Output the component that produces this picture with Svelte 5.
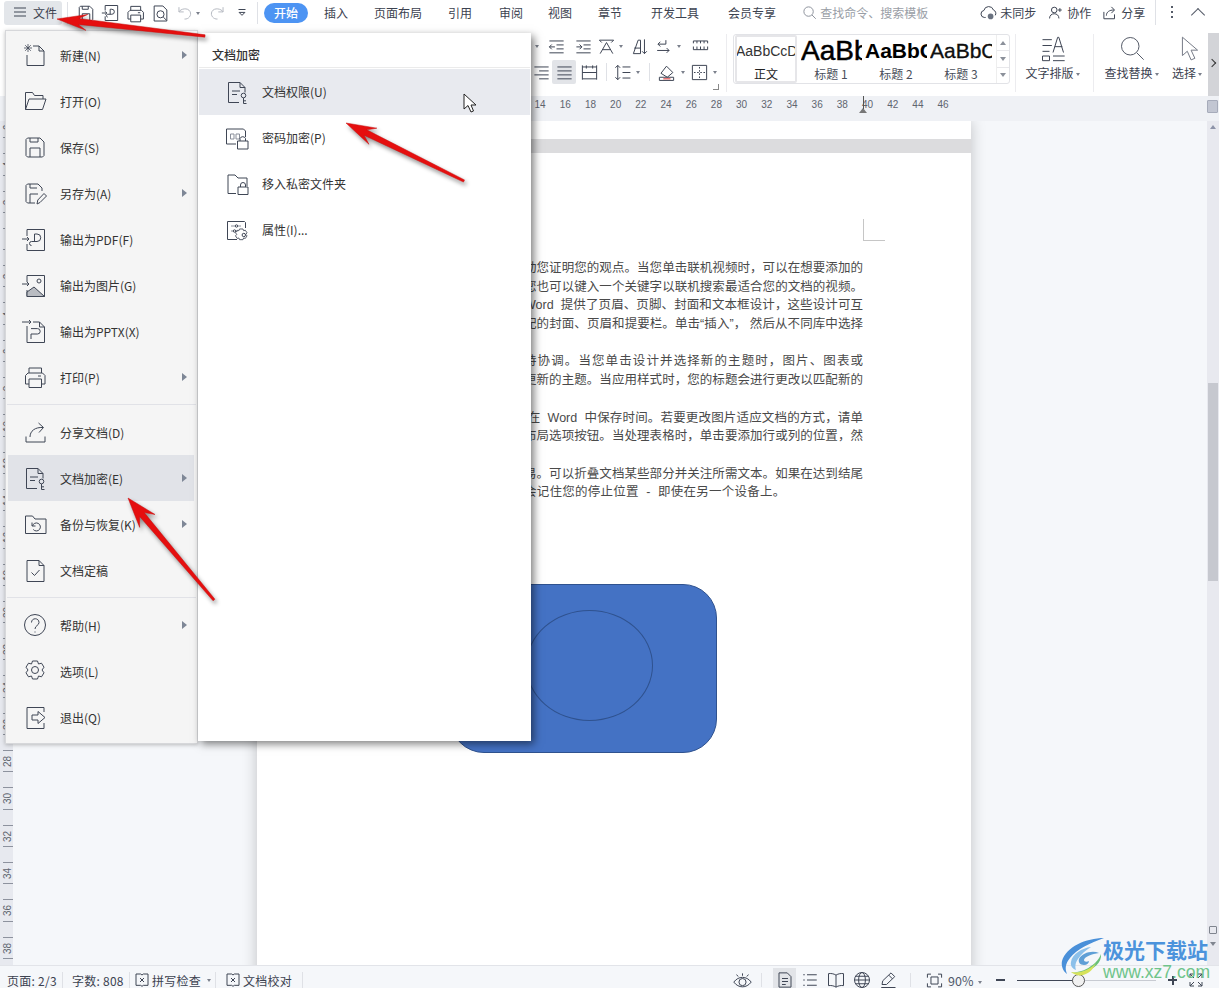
<script>
	const icons = {
		menu: '<path d="M3 6h18M3 12h18M3 18h18"/>',
		save: '<path d="M3 4.500 4.500 3H17l4 4v13.500L19.500 22h-15L3 20.500z"/><path d="M7 22v-9h10v9M7 3v4h8V3"/>',
		saveAs: '<path d="M12 22H4.500L3 20.500v-16L4.500 3H15l4 4v3"/><path d="M7 22v-9h8M7 3v4h7"/><path d="m14 23 .8-4L21 12.500l2.500 2.500-6.500 6.500z"/>',
		newDoc: '<path d="M10 3h6l5 5v14.500H4V12"/><path d="M16 3v5h5"/><path d="M5 1v8M1 5h8M2.200 2.200l5.600 5.600M7.800 2.200 2.200 7.800" stroke-width=".8"/>',
		open: '<path d="M2.500 20.500v-17h7l2 3h8.500V10"/><path d="M2.500 20.500h17L23 10H6z"/>',
		pdf: '<path d="M4 9V2.500h17.500v21H4V17"/><path d="M-1 12h7M4 10l2 2-2 2"/><path d="M8.500 18.500a2 2 0 0 1 0-4H14a3.700 3.700 0 0 0 0-7.500h-2.500v7.500"/>',
		image: '<path d="M4 9V2.500h17.500v21H4V17"/><path d="M-1 11h7M4 9l2 2-2 2"/><circle cx="16" cy="8" r="2"/><path d="M4 23.500V19l7-5 10.500 9.500z" fill="#b9bcc2"/>',
		pptx: '<path d="M4 7v16.500h17.500V8l-5-5H10"/><path d="M16.500 3v5h5"/><path d="M-1 3h9M6 1l2 2-2 2"/><path d="M8 15h6.500a2.700 2.700 0 0 0 0-5.400H8M8 15v5"/>',
		print: '<path d="M6 8V3h12.500v5"/><path d="M6 19H2.500V10.500L5 8h14.500L22 10.500V19h-3.500"/><path d="M6 14h12.500v8.500H6z"/><path d="M15 11h3"/>',
		share: '<path d="M3 16.500v5.500h19v-5.500"/><path d="M7 17c0-6 5-10 13-9.500"/><path d="m15.500 3 5 4.500-4.500 5"/>',
		encrypt: '<path d="M14 22.500H3.500v-20H15l5 5v5"/><path d="M15 2.500v5h5"/><path d="M7 11h8M7 14.500h5"/><circle cx="18.500" cy="15.500" r="2.300"/><path d="M18.500 18v5.500h3M18.500 20.800h2.500"/>',
		backup: '<path d="M2.500 21.500V4h7l2.500 3h11v14.500z"/><path d="M9 10.500v3.500h3.500"/><path d="M9.500 14a4 4 0 1 1 .8 3.500"/>',
		final: '<path d="M4 2.500h12l5 5v16H4z"/><path d="M16 2.500v5h5"/><path d="m8.500 14.500 3 3 5-5.500"/>',
		help: '<circle cx="12" cy="12" r="10.500"/><path d="M8.500 9.500c0-5 7.500-5 7.500 0 0 3-4 3-4 6.500M12 18.500v1"/>',
		gear: '<path d="M9.500 2h5l1 3 3-.8 2.500 4-2 2.800 2 2.800-2.500 4-3-.8-1 3h-5l-1-3-3 .8L3 13.800 5 11 3 8.200l2.500-4 3 .8z"/><circle cx="12" cy="11" r="3.500"/>',
		exit: '<path d="M21 7V2.500H4v21h17V18"/><path d="M9 10h6V6.500l7 6-7 6V15H9z"/>',
		password: '<path d="M11 18H1.500V3h17l2 2v6"/><path d="M5.500 8h3.500v5H5.500zM11 8h3.500v5H11z" stroke="#8a8f9a"/><path d="M12.500 15h10.500v8H12.500zM15 15v-2.500a3 3 0 0 1 5.500 0V15"/>',
		privateFolder: '<path d="M11 21.500H3V3h7l3 3h9v8"/><path d="M13 15h10v7.500H13zM15.500 15v-2a2.500 2.500 0 0 1 5 0v2"/>',
		props: '<path d="M12 21.500H2.500v-18h17l1 1V10"/><path d="M6 8h4M13 8h3M6 13h2M11 13h2" stroke="#8a8f9a"/><circle cx="11.500" cy="8" r="1.200"/><circle cx="9.500" cy="13" r="1.200"/><path d="M15 11.500h4l.8 2 2-.5 2 3-1.500 1.800 1.500 1.800-2 3-2-.5-.8 2h-4l-.8-2-2 .5-2-3 1.500-1.800-1.500-1.800 2-3 2 .5z" transform="translate(1.800 1.200) scale(.85)"/><circle cx="18.800" cy="17" r="1.700"/>',
		export: '<path d="M5 9V3h15v18H5v-5"/><path d="M1 12h6M5 10l2 2-2 2"/><path d="M8 17a1.800 1.800 0 0 1 0-3.500h5a3 3 0 0 0 0-6h-2v6"/>',
		preview: '<path d="M4 2.500h11l5 5v14H4z"/><circle cx="12" cy="13" r="4.500"/><path d="m15.500 16.500 4 4"/>',
		undo: '<path d="M5 4v6h6"/><path d="M5 10c2-4 11-6 14-.5 2.500 5-2 10-7 9.500"/>',
		redo: '<path d="M19 4v6h-6"/><path d="M19 10c-2-4-11-6-14-.5-2.500 5 2 10 7 9.500"/>',
		listDrop: '<path d="M6 6h12M7 11l5 5 5-5z"/>',
		search: '<circle cx="10.500" cy="10.500" r="7.500"/><path d="m16 16 6 6"/>',
		cloud: '<path d="M8 19H6a5 5 0 0 1-.5-9.900A7 7 0 0 1 19 8.500a5 5 0 0 1 2.500 7.500"/><circle cx="15" cy="17.500" r="4" fill="#6a7280" stroke="none"/>',
		person: '<circle cx="10" cy="8" r="4.500"/><path d="M2.500 21.500c0-5 3.500-7.500 7.500-7.500s7.500 2.500 7.500 7.500"/><path d="M19 5v6M16 8h6"/>',
		shareTop: '<path d="M3 11v11h17v-7"/><path d="M7 17c0-6 5-9 12-9"/><path d="m15 3 5 5-5 5"/>',
		outdent: '<path d="M3 5h18M12 10h9M12 15h9M3 20h18M3 12.500h7M6 9.500l-3 3 3 3"/>',
		indent: '<path d="M3 5h18M12 10h9M12 15h9M3 20h18M3 12.500h7M7 9.500l3 3-3 3"/>',
		asian: '<path d="M3 4h18M12 7 4 21M12 7l8 14M7 16h10M3 4l3 3M21 4l-3 3"/>',
		sort: '<path d="M3 21 9 4h3v17H3zM4 14h8"/><path d="M17 3v18M14 18l3 3 3-3"/>',
		returnArrow: '<path d="M15 4v5H5M8 6 5 9l3 3"/><path d="M4 17h15M16 14l3 3-3 3"/>',
		rulerTool: '<path d="M3 5h18M3 16h18M3 5v3M7.500 5v3M12 5v3M16.500 5v3M21 5v3M3 12v4M7.500 12v4M12 12v4M16.500 12v4M21 12v4"/>',
		alignRight: '<path d="M3 5h18M9 10h12M3 15h18M9 20h12"/>',
		alignJustify: '<path d="M3 5h18M3 10h18M3 15h18M3 20h18"/>',
		distribute: '<path d="M3 3v18M21 3v18M3 5h18M3 12h18M3 20h18M8 3v4M16 3v4"/>',
		lineSpacing: '<path d="M6 3v18M3 6l3-3 3 3M3 18l3 3 3-3M12 5h10M12 12h10M12 19h10"/>',
		shade: '<path d="m5 13 7-9 8 8-7 6z"/><path d="M3 18h18v4H3z"/><path d="M8 20h9" stroke="#d33" />',
		borders: '<path d="M3 3h18v18H3z"/><path d="M12 5v2M12 9v2M12 13v2M12 17v2M5 12h2M9 12h2M13 12h2M17 12h2"/>',
		textLayout: '<path d="M3 4h8M3 9h8M3 14h6"/><path d="M3 18h6v4H3z"/><path d="m12 15 4-13h1l4 13M13.500 10h6.500M12 18h10M12 22h10"/>',
		pointer: '<path d="M5 2v17l4.500-4 3.500 8 3.500-1.500-3.500-7.500H19z"/>',
		spell: '<path d="M3 3h7l2 1.500L14 3h7v17h-7l-2 1.500L10 20H3z"/><path d="m9 9 6 6M15 9l-6 6"/>',
		eye: '<path d="M1 14c6-8 16-8 22 0-6 8-16 8-22 0z"/><circle cx="12" cy="14" r="4.500"/><path d="M12 3v3M4.500 4.500l2 2.500M19.500 4.500l-2 2.500"/>',
		pageView: '<path d="M4 2.500h11l5 5v14H4z"/><path d="M8 10h8M8 14h8M8 18h5"/>',
		outline: '<path d="M3 5h2M8 5h13M3 12h2M8 12h13M3 19h2M8 19h13"/>',
		book: '<path d="M12 5.500C9 3.500 5 3 2 3.500v16c3-.5 7 0 10 2 3-2 7-2.500 10-2v-16c-3-.5-7 0-10 2zM12 5.500v16"/>',
		globe: '<circle cx="12" cy="12" r="10"/><ellipse cx="12" cy="12" rx="4.500" ry="10"/><path d="M2 12h20M3.500 7h17M3.500 17h17"/>',
		pen: '<path d="M3 22h19M4 18l1-5L16 2.500l5 5L10 18z"/><path d="m13 5.500 5 5"/>',
		focus: '<path d="M2 8V3h5M17 3h5v5M22 16v5h-5M7 21H2v-5"/><path d="M7 7h10v10H7z"/>',
		full: '<path d="M3 9V3h6M21 9V3h-6M3 15v6h6M21 15v6h-6M3 3l6 6M21 3l-6 6M3 21l6-6M21 21l-6-6"/>'
	};

	const mainMenu = [
		[
			{ icon: 'newDoc', label: '新建(N)', sub: true },
			{ icon: 'open', label: '打开(O)' },
			{ icon: 'save', label: '保存(S)' },
			{ icon: 'saveAs', label: '另存为(A)', sub: true },
			{ icon: 'pdf', label: '输出为PDF(F)' },
			{ icon: 'image', label: '输出为图片(G)' },
			{ icon: 'pptx', label: '输出为PPTX(X)' },
			{ icon: 'print', label: '打印(P)', sub: true }
		],
		[
			{ icon: 'share', label: '分享文档(D)' },
			{ icon: 'encrypt', label: '文档加密(E)', sub: true, active: true },
			{ icon: 'backup', label: '备份与恢复(K)', sub: true },
			{ icon: 'final', label: '文档定稿' }
		],
		[
			{ icon: 'help', label: '帮助(H)', sub: true },
			{ icon: 'gear', label: '选项(L)' },
			{ icon: 'exit', label: '退出(Q)' }
		]
	];

	const subMenu = [
		{ icon: 'encrypt', label: '文档权限(U)', active: true },
		{ icon: 'password', label: '密码加密(P)' },
		{ icon: 'privateFolder', label: '移入私密文件夹' },
		{ icon: 'props', label: '属性(I)...' }
	];

	const tabs = ['插入', '页面布局', '引用', '审阅', '视图', '章节', '开发工具', '会员专享'];

	const toolsTop = [
		{ caret: true, w: 12 },
		{ icon: 'outdent', w: 27 },
		{ icon: 'indent', w: 26 },
		{ icon: 'asian', w: 20 },
		{ caret: true, w: 10 },
		{ icon: 'sort', w: 28 },
		{ icon: 'returnArrow', w: 18 },
		{ caret: true, w: 14 },
		{ icon: 'rulerTool', w: 28 }
	];
	const toolsBottom = [
		{ icon: 'alignRight', w: 21 },
		{ icon: 'alignJustify', w: 24, on: true },
		{ icon: 'distribute', w: 26 },
		{ sep: true, w: 9 },
		{ icon: 'lineSpacing', w: 22 },
		{ caret: true, w: 10 },
		{ sep: true, w: 12 },
		{ icon: 'shade', w: 23 },
		{ caret: true, w: 10 },
		{ icon: 'borders', w: 22 },
		{ caret: true, w: 10 }
	];

	const styleTiles = [
		{ sample: 'AaBbCcDd', label: '正文', cls: 'normal' },
		{ sample: 'AaBbC', label: '标题 1', cls: 'h1' },
		{ sample: 'AaBbC', label: '标题 2', cls: 'h2' },
		{ sample: 'AaBbC', label: '标题 3', cls: 'h3' }
	];

	const rulerNums = [14, 16, 18, 20, 22, 24, 26, 28, 30, 32, 34, 36, 38, 40, 42, 44, 46];
	const sideNums = [6, 4, 2, 0, 2, 4, 6, 8, 10, 12, 14, 16, 18, 20, 22, 24, 26, 28, 30, 32, 34, 36, 38];

	const paragraphs = [
		[
			'动您证明您的观点。当您单击联机视频时，可以在想要添加的',
			'您也可以键入一个关键字以联机搜索最适合您的文档的视频。',
			'Word \u00a0提供了页眉、页脚、封面和文本框设计，这些设计可互',
			'配的封面、页眉和提要栏。单击“插入”， 然后从不同库中选择'
		],
		['持协调。当您单击设计并选择新的主题时，图片、图表或', '更新的主题。当应用样式时，您的标题会进行更改以匹配新的'],
		['\u00a0在 \u00a0Word \u00a0中保存时间。若要更改图片适应文档的方式，请单', '布局选项按钮。当处理表格时，单击要添加行或列的位置，然'],
		['易。可以折叠文档某些部分并关注所需文本。如果在达到结尾']
	];

	function arrow(tip, tail, headLen, headW, neckW, tailW) {
		const dx = tail[0] - tip[0];
		const dy = tail[1] - tip[1];
		const len = Math.hypot(dx, dy);
		const ux = dx / len;
		const uy = dy / len;
		const at = (along, side) => `${tip[0] + ux * along - uy * side},${tip[1] + uy * along + ux * side}`;
		return [
			at(0, 0),
			at(headLen, headW),
			at(headLen * 0.72, neckW),
			at(len, tailW),
			at(len, -tailW),
			at(headLen * 0.72, -neckW),
			at(headLen, -headW)
		].join(' ');
	}

	const arrows = [
		arrow([57, 19], [205, 36], 30, 8, 3, 1.2),
		arrow([128, 498], [214, 600], 30, 10, 3, 1.2),
		arrow([346, 123], [464, 181], 30, 9, 3, 1.2)
	];
</script>

{#snippet icon(name, size = 24)}
	<svg class="icon" width={size} height={size} viewBox="0 0 24 24" fill="none" stroke="currentColor" stroke-width={24 / size}>
		{@html icons[name]}
	</svg>
{/snippet}

{#snippet tool(item)}
	{#if item.sep}
		<span class="tool" style="width:{item.w}px"><i class="vsep"></i></span>
	{:else if item.caret}
		<span class="tool" style="width:{item.w}px"><i class="caret"></i></span>
	{:else}
		<span class="tool" class:on={item.on} style="width:{item.w}px">{@render icon(item.icon, 19)}</span>
	{/if}
{/snippet}

<div class="app">
	<header class="topbar">
		<button class="file-btn">
			{@render icon('menu', 16)}
			<span>文件</span>
		</button>
		<i class="vsep qsep"></i>
		<div class="quick">
			<span class="q">{@render icon('save', 18)}</span>
			<span class="q">{@render icon('export', 20)}</span>
			<span class="q">{@render icon('print', 19)}</span>
			<span class="q">{@render icon('preview', 19)}</span>
			<span class="q faded undo">{@render icon('undo', 19)}<i class="caret"></i></span>
			<span class="q faded redo">{@render icon('redo', 19)}</span>
			<span class="q drop">{@render icon('listDrop', 14)}</span>
		</div>
		<i class="vsep qsep2"></i>
		<span class="pill">开始</span>
		<nav class="tabs">
			{#each tabs as tab}
				<span>{tab}</span>
			{/each}
		</nav>
		<div class="search">
			<span class="search-ic">{@render icon('search', 15)}</span>
			<span>查找命令、搜索模板</span>
		</div>
		<div class="actions">
			<span class="act act-sync">{@render icon('cloud', 17)}未同步</span>
			<span class="act">{@render icon('person', 15)}协作</span>
			<span class="act">{@render icon('shareTop', 15)}分享</span>
			<i class="vsep actsep"></i>
			<span class="dots"><i></i><i></i><i></i></span>
			<span class="chev-up"></span>
		</div>
	</header>

	<section class="ribbon">
		<div class="tools">
			<div class="tool-row">
				{#each toolsTop as item}{@render tool(item)}{/each}
			</div>
			<div class="tool-row">
				{#each toolsBottom as item}{@render tool(item)}{/each}
			</div>
			<i class="launcher"></i>
		</div>
		<div class="styles">
			{#each styleTiles as tile, i}
				<div class="tile" class:picked={i === 0}>
					<div class="sample {tile.cls}">{tile.sample}</div>
					<div class="tile-label">{tile.label}</div>
				</div>
			{/each}
			<div class="style-scroll">
				<div class="cell"><span class="up"></span></div>
				<div class="cell"><span class="down"></span></div>
				<div class="cell"><span class="more"></span></div>
			</div>
		</div>
		<div class="big big-layout">
			{@render icon('textLayout', 28)}
			<span>文字排版<i class="caret"></i></span>
		</div>
		<div class="big big-find">
			<span class="lens">{@render icon('search', 28)}</span>
			<span>查找替换<i class="caret"></i></span>
		</div>
		<div class="big big-select">
			{@render icon('pointer', 26)}
			<span>选择<i class="caret"></i></span>
		</div>
		<div class="collapse"><span></span></div>
	</section>

	<div class="hruler">
		{#each rulerNums as n}
			<span>{n}</span>
		{/each}
		<i class="indent-mark"></i>
		<b class="ruler-toggle"></b>
	</div>

	<main class="main">
		<aside class="vruler">
			<div class="vruler-inner">
				{#each sideNums as n}
					<div class="vnum"><span>{n === 0 ? '' : n}</span></div>
				{/each}
			</div>
		</aside>
		<div class="work">
			<div class="sheet">
				<div class="prev-page"></div>
				<div class="page-gap"></div>
				<article class="page">
					<i class="corner"></i>
					<div class="text">
						{#each paragraphs as lines, i}
							{#each lines as line}
								<p class="line">{line}</p>
							{/each}
							{#if i < 3}
								<p class="line blank">&nbsp;</p>
							{/if}
						{/each}
						<p class="line last">会记住您的停止位置 &nbsp;-&nbsp; 即使在另一个设备上。</p>
					</div>
					<div class="shape"><i class="ellipse"></i></div>
				</article>
			</div>
		</div>
		<aside class="scroll">
			<span class="scroll-up"></span>
			<span class="thumb"></span>
			<span class="scroll-page"></span>
			<span class="scroll-down"></span>
		</aside>
	</main>

	<footer class="status">
		<span class="st st-page">页面: 2/3</span>
		<span class="st st-count">字数: 808</span>
		<span class="st st-spell">{@render icon('spell', 16)}拼写检查<i class="caret"></i></span>
		<span class="st st-check">{@render icon('spell', 16)}文档校对</span>
		<div class="status-right">
			<span class="vw eye">{@render icon('eye', 19)}</span>
			<i class="vsep"></i>
			<span class="vw on">{@render icon('pageView', 18)}</span>
			<span class="vw">{@render icon('outline', 18)}</span>
			<span class="vw">{@render icon('book', 18)}</span>
			<span class="vw">{@render icon('globe', 18)}</span>
			<span class="vw">{@render icon('pen', 18)}</span>
			<i class="vsep"></i>
			<span class="vw focus">{@render icon('focus', 17)}</span>
			<span class="zoom-val">90%<i class="caret"></i></span>
			<span class="minus"></span>
			<span class="slider"><i class="fill"></i><i class="knob"></i></span>
			<span class="plus"></span>
			<span class="vw full">{@render icon('full', 16)}</span>
		</div>
	</footer>

	<div class="menu">
		{#each mainMenu as group, g}
			{#if g > 0}<div class="menu-sep"></div>{/if}
			{#each group as item}
				<div class="row" class:active={item.active}>
					{@render icon(item.icon)}
					<span class="row-label">{item.label}</span>
					{#if item.sub}<i class="more-arrow"></i>{/if}
				</div>
			{/each}
		{/each}
	</div>

	<div class="submenu">
		<div class="sub-title">文档加密</div>
		{#each subMenu as item}
			<div class="sub-row" class:active={item.active}>
				{@render icon(item.icon)}
				<span class="sub-label">{item.label}</span>
			</div>
		{/each}
	</div>

	<div class="mark">
		<svg class="swirl" width="50" height="42" viewBox="0 0 50 42">
			<path d="M44 1C26 1 6 10 2 24c-1 5 1 10 5 13-2-5-2-10 3-16C17 12 30 6 44 1z" fill="#4a90d9" />
			<path d="M31 10c-9 1-19 7-20 15-1 4 2 7 5 8-1-3-1-7 2-11 3-5 8-9 13-12z" fill="#8cc0ea" />
			<path d="M39 16c-7-3-17 0-20 6-1 3 1 6 5 6 3 0 5-2 5-4-2 1-5 1-5-1 0-3 8-6 15-7z" fill="#5f9fd6" />
			<path d="M41 17c1 8-7 16-18 18-5 1-9 1-12 0 11 1 18-4 24-9 3-3 5-6 6-9z" fill="#69c07a" />
			<path d="M11 35c8 7 20 3 25-9-4 5-14 11-25 9z" fill="#d6e25a" />
		</svg>
		<div class="mark-text">
			<div class="mark-cn">极光下载站</div>
			<div class="mark-url">www.xz7.com</div>
		</div>
	</div>

	<svg class="overlay" width="1219" height="988" viewBox="0 0 1219 988">
		{#each arrows as points}
			<polygon {points} fill="#e50f0f" stroke="#c90d0d" stroke-width=".5" />
		{/each}
	</svg>
	<svg class="cursor" width="14" height="20" viewBox="0 0 14 20">
		<path d="M1 1v15l4-3.500L8 19l2.500-1L8 12h5z" fill="#fff" stroke="#222" stroke-width="1" />
	</svg>
</div>

<style>
	:global(body) {
		margin: 0;
	}

	.app {
		position: relative;
		width: 1219px;
		height: 988px;
		overflow: hidden;
		display: flex;
		flex-direction: column;
		background: #f5f7fa;
		color: #3c4250;
		font-family: 'Noto Sans CJK SC', 'Noto Sans', sans-serif;
		font-size: 12px;
	}

	.icon {
		display: block;
		flex-shrink: 0;
		overflow: visible;
		color: #3f4655;
	}

	i {
		display: block;
		font-style: normal;
	}

	.vsep {
		width: 1px;
		height: 18px;
		background: #dfe1e6;
		flex-shrink: 0;
	}

	.caret {
		display: inline-block;
		width: 0;
		height: 0;
		border-left: 2.5px solid transparent;
		border-right: 2.5px solid transparent;
		border-top: 3px solid #7b808c;
		vertical-align: middle;
	}

	/* top bar */
	.topbar {
		height: 30px;
		background: #fff;
		display: flex;
		align-items: center;
		flex-shrink: 0;
	}

	.file-btn {
		display: flex;
		align-items: center;
		gap: 5px;
		width: 58px;
		height: 24px;
		margin: 0 0 4px 4px;
		padding: 0 0 2px 8px;
		border: 0;
		border-radius: 3px;
		background: #e3e6ea;
		color: #3c4250;
		font: inherit;
	}

	.qsep {
		margin: 0 0 4px 5px;
		height: 22px;
	}

	.quick {
		display: flex;
		align-items: center;
		width: 189px;
		height: 24px;
		margin-bottom: 4px;
	}

	.q {
		display: flex;
		align-items: center;
		justify-content: center;
		width: 25px;
	}

	.q:first-child {
		margin-left: 5px;
	}

	.q.faded .icon {
		color: #b6bac2;
	}

	.undo {
		width: 32px;
		gap: 2px;
		margin-left: -2px;
	}

	.redo {
		width: 26px;
		margin-left: 1px;
	}

	.drop {
		width: 24px;
	}

	.qsep2 {
		height: 22px;
		margin-bottom: 4px;
	}

	.pill {
		width: 44px;
		height: 20px;
		margin: 0 16px 4px 6px;
		border-radius: 10px;
		background: #4d94f3;
		color: #fff;
		font-weight: 500;
		line-height: 19px;
		text-align: center;
	}

	.tabs {
		display: flex;
		gap: 26px;
		margin-bottom: 6px;
		white-space: nowrap;
	}

	.tabs span:nth-child(4) {
		margin-left: 1px;
	}

	.tabs span:nth-child(5) {
		margin-left: -1px;
	}

	.tabs span:nth-child(7),
	.tabs span:nth-child(8) {
		margin-left: 3px;
	}

	.search {
		display: flex;
		align-items: center;
		gap: 3px;
		margin: 0 0 6px 26px;
		color: #9a9ea6;
		white-space: nowrap;
	}

	.search-ic .icon {
		color: #8f949e;
	}

	.actions {
		display: flex;
		align-items: center;
		margin: 0 0 6px 52px;
		white-space: nowrap;
	}

	.act {
		display: flex;
		align-items: center;
		gap: 4px;
		margin-right: 11px;
	}

	.act-sync {
		gap: 3px;
		margin-right: 12px;
	}

	.actsep {
		margin: 0 15px 0 -1px;
		height: 26px;
	}

	.dots {
		display: flex;
		flex-direction: column;
		gap: 3px;
		margin-right: 20px;
	}

	.dots i {
		width: 2px;
		height: 2px;
		background: #555b68;
	}

	.chev-up {
		width: 9px;
		height: 9px;
		margin-top: 5px;
		border-left: 1px solid #555b68;
		border-top: 1px solid #555b68;
		transform: rotate(45deg);
	}

	/* ribbon */
	.ribbon {
		height: 66px;
		flex-shrink: 0;
		background: #fff;
		display: flex;
		box-sizing: border-box;
		padding: 4px 0 0 531px;
		position: relative;
	}

	.tools {
		position: relative;
		width: 195px;
		border-right: 1px solid #ececef;
		margin-right: 6px;
		height: 58px;
		flex-shrink: 0;
	}

	.tool-row {
		display: flex;
		height: 24px;
		margin-bottom: 2px;
	}

	.tool {
		display: flex;
		align-items: center;
		justify-content: center;
		flex-shrink: 0;
		border-radius: 2px;
	}

	.tool.on {
		background: #e2e4e8;
	}

	.launcher {
		position: absolute;
		right: 7px;
		bottom: 2px;
		width: 5px;
		height: 5px;
		border-right: 1px solid #888;
		border-bottom: 1px solid #888;
	}

	.styles {
		display: flex;
		width: 277px;
		height: 50px;
		box-sizing: border-box;
		border: 1px solid #e2e3e7;
		border-radius: 3px;
		padding: 0 0 0 1px;
		flex-shrink: 0;
	}

	.tile {
		width: 62px;
		margin-right: 3px;
		overflow: hidden;
		box-sizing: border-box;
		text-align: center;
	}

	.tile.picked {
		border: 2px solid #e6e6e9;
		border-radius: 2px;
	}

	.sample {
		height: 29px;
		line-height: 29px;
		font-family: 'Liberation Sans', sans-serif;
		white-space: nowrap;
		color: #111;
		overflow: hidden;
		text-align: left;
	}

	.sample.normal {
		font-size: 14px;
		color: #333;
		margin-left: -1px;
	}

	.sample.h1 {
		font-size: 28px;
		font-weight: 400;
		height: 31px;
		line-height: 31px;
		margin-left: 1px;
		color: #000;
		-webkit-text-stroke: 0.5px #000;
	}

	.sample.h2 {
		font-size: 21px;
		font-weight: 700;
		height: 31px;
		line-height: 31px;
		color: #000;
	}

	.sample.h3 {
		font-size: 21px;
		height: 31px;
		line-height: 31px;
		-webkit-text-stroke: 0.3px #000;
	}

	.tile-label {
		font-size: 12px;
		line-height: 15px;
		color: #4a4f5a;
	}

	.tile.picked .tile-label {
		color: #222;
	}

	.style-scroll {
		display: flex;
		flex-direction: column;
		width: 12px;
		margin-left: 1px;
		border-left: 1px solid #eee;
	}

	.cell {
		flex: 1;
		display: flex;
		align-items: center;
		justify-content: center;
	}

	.cell + .cell {
		border-top: 1px solid #e8e8eb;
	}

	.up,
	.down,
	.more {
		width: 0;
		height: 0;
		border-left: 3px solid transparent;
		border-right: 3px solid transparent;
	}

	.up {
		border-bottom: 4px solid #8b909a;
	}

	.down {
		border-top: 4px solid #8b909a;
	}

	.more {
		border-top: 4px solid #8b909a;
	}

	.big {
		display: flex;
		flex-direction: column;
		align-items: center;
		justify-content: space-between;
		height: 48px;
		white-space: nowrap;
		flex-shrink: 0;
	}

	.big .caret {
		margin-left: 2px;
	}

	.big-layout {
		width: 78px;
		margin-left: 5px;
		padding: 1px 4px 11px 0;
		border-left: 1px solid #ececef;
		box-sizing: border-box;
		height: 58px;
	}

	.big-find {
		width: 68px;
		border-left: 1px solid #ececef;
		box-sizing: border-box;
		height: 58px;
		padding: 0 0 11px 8px;
	}

	.lens .icon {
		color: #555b68;
	}

	.big-select {
		width: 46px;
		height: 58px;
		box-sizing: border-box;
		padding: 1px 0 11px 6px;
	}

	.big-select .icon {
		margin-left: 6px;
		color: #777c88;
	}

	.collapse {
		position: absolute;
		right: 0;
		top: 3px;
		width: 11px;
		height: 63px;
		background: #d3d4d8;
	}

	.collapse span {
		display: block;
		width: 5px;
		height: 5px;
		margin: 27px 0 0 1px;
		border-right: 1px solid #333;
		border-top: 1px solid #333;
		transform: rotate(45deg);
	}

	/* rulers */
	.hruler {
		position: relative;
		height: 25px;
		flex-shrink: 0;
		display: flex;
		box-sizing: border-box;
		padding: 3px 0 0 527.5px;
		background: #eff1f5;
		font-family: 'Liberation Sans', sans-serif;
		font-size: 10px;
		color: #60656f;
	}

	.hruler span {
		width: 25.2px;
		flex-shrink: 0;
		text-align: center;
	}

	.indent-mark {
		position: absolute;
		left: 859px;
		top: 12px;
		width: 0;
		height: 0;
		border-left: 4px solid transparent;
		border-right: 4px solid transparent;
		border-bottom: 5px solid #777;
	}

	.indent-mark::before {
		content: '';
		position: absolute;
		left: 0;
		top: -12px;
		width: 1px;
		height: 13px;
		background: #555;
	}

	.ruler-toggle {
		position: absolute;
		right: 1px;
		top: 4px;
		width: 9px;
		height: 11px;
		border: 1px solid #a6abba;
		background: #c2c6d2;
		border-radius: 1px;
	}

	.main {
		flex: 1;
		min-height: 0;
		display: flex;
	}

	.vruler {
		width: 13px;
		flex-shrink: 0;
		overflow: hidden;
		background: #e7e9ef;
	}

	.vruler-inner {
		margin-top: -12px;
	}

	.vnum {
		position: relative;
		height: 37.3px;
		display: flex;
		align-items: center;
		justify-content: center;
		font-family: 'Liberation Sans', sans-serif;
		font-size: 10px;
		color: #60656f;
	}

	.vnum span {
		transform: rotate(-90deg);
		margin-left: 2px;
	}

	.vnum::before,
	.vnum::after {
		content: '';
		position: absolute;
		left: 3px;
		right: 0;
		height: 1px;
		background: #8d929e;
	}

	.vnum::before {
		top: 7px;
	}

	.vnum::after {
		bottom: 8px;
	}

	.work {
		flex: 1;
		min-width: 0;
		overflow: hidden;
		background: #f5f7fa;
	}

	.sheet {
		width: 714px;
		margin-left: 244px;
		height: 900px;
		background: #fff;
		box-shadow: 0 0 14px rgba(0, 0, 0, 0.22);
	}

	.prev-page {
		height: 18px;
		background: #fff;
	}

	.page-gap {
		height: 14px;
		background: #dcdcde;
	}

	.page {
		position: relative;
		padding: 106px 108px 0 267px;
		background: #fff;
	}

	.corner {
		position: absolute;
		left: 606px;
		top: 66px;
		width: 21px;
		height: 21px;
		border-left: 1px solid #c6c6c6;
		border-bottom: 1px solid #c6c6c6;
	}

	.line {
		margin: 0;
		height: 18.7px;
		line-height: 18.7px;
		font-family: 'Liberation Sans', 'Noto Sans CJK SC', sans-serif;
		font-size: 12.5px;
		color: #4a4a4a;
		text-align: justify;
		text-align-last: justify;
		white-space: nowrap;
		overflow: hidden;
	}

	.line.blank,
	.line.last {
		text-align: left;
		text-align-last: left;
	}

	.line.last {
		letter-spacing: 0.25px;
	}

	.shape {
		position: relative;
		width: 267px;
		height: 169px;
		margin: 82px 0 0 -74px;
		box-sizing: border-box;
		border: 1px solid #2f528f;
		border-radius: 34px;
		background: #4472c4;
	}

	.ellipse {
		position: absolute;
		left: 75px;
		top: 25px;
		width: 125px;
		height: 109px;
		border: 1px solid #2f528f;
		border-radius: 50%;
	}

	.scroll {
		position: relative;
		width: 12px;
		flex-shrink: 0;
		display: flex;
		flex-direction: column;
		align-items: center;
		background: #e8e9ef;
	}

	.scroll-up {
		margin-top: 4px;
		border-left: 3px solid transparent;
		border-right: 3px solid transparent;
		border-bottom: 4px solid #8d93a8;
	}

	.thumb {
		width: 10px;
		height: 198px;
		margin-top: 254px;
		background: #c6c8cf;
	}

	.scroll-page {
		width: 6px;
		height: 6px;
		margin-top: 345px;
		border: 1px solid #80858f;
		border-radius: 1px;
	}

	.scroll-down {
		margin-top: 8px;
		border-left: 3px solid transparent;
		border-right: 3px solid transparent;
		border-top: 4px solid #80858f;
	}

	/* status bar */
	.status {
		height: 23px;
		flex-shrink: 0;
		box-sizing: border-box;
		display: flex;
		align-items: flex-end;
		border-top: 1px solid #e2e4e9;
		background: #f5f7fa;
		white-space: nowrap;
	}

	.st {
		display: flex;
		align-items: center;
		height: 16px;
		gap: 2px;
		border-right: 1px solid #dfe1e6;
		box-sizing: border-box;
		letter-spacing: 0.25px;
	}

	.st-page {
		width: 63px;
		padding-left: 7px;
	}

	.st-count {
		width: 67px;
		padding-left: 9px;
	}

	.st-spell {
		width: 86px;
		padding-left: 4px;
	}

	.st-spell .caret {
		margin-left: 4px;
	}

	.st-check {
		width: 87px;
		padding-left: 9px;
	}

	.status-right {
		display: flex;
		align-items: center;
		height: 16px;
		margin-left: 427px;
	}

	.vw {
		display: flex;
		align-items: center;
		justify-content: center;
		width: 26px;
		height: 16px;
	}

	.vw.eye {
		width: 24px;
		margin-right: 7px;
	}

	.vw.on {
		width: 23px;
		margin: 0 1px 0 11px;
		background: #e2e4e8;
		box-shadow: 0 -4px 0 #e2e4e8;
	}

	.status-right > .vsep {
		height: 14px;
	}

	.status-right > .vsep:nth-of-type(2) {
		margin-left: 9px;
	}

	.focus {
		margin-left: 10px;
	}

	.zoom-val {
		width: 44px;
		margin-left: 1px;
		font-size: 12.5px;
		color: #50596a;
	}

	.zoom-val .caret {
		margin-left: 5px;
	}

	.minus {
		width: 9px;
		height: 2px;
		margin-left: 4px;
		background: #3f4655;
	}

	.slider {
		position: relative;
		width: 139px;
		height: 1px;
		margin-left: 12px;
		background: #c8cbd2;
	}

	.fill {
		width: 61px;
		height: 1px;
		background: #3f4655;
	}

	.knob {
		position: absolute;
		left: 55px;
		top: -6px;
		width: 11px;
		height: 11px;
		border: 1px solid #555;
		border-radius: 50%;
		background: #f1f1f1;
	}

	.plus {
		position: relative;
		width: 9px;
		height: 9px;
		margin-left: 12px;
		background:
			linear-gradient(#3f4655, #3f4655) center / 9px 2px no-repeat,
			linear-gradient(#3f4655, #3f4655) center / 2px 9px no-repeat;
	}

	.full {
		margin-left: 6px;
	}

	/* file menu */
	.menu {
		position: absolute;
		left: 5px;
		top: 30px;
		width: 193px;
		height: 714px;
		box-sizing: border-box;
		padding: 1px 3px 3px 2px;
		background: #f5f5f5;
		border: 1px solid #d6d7da;
		box-shadow: 0 1px 4px rgba(0, 0, 0, 0.25);
	}

	.row {
		display: flex;
		align-items: center;
		height: 46px;
		padding-left: 15px;
	}

	.row.active {
		background: #e1e3e8;
	}

	.row-label {
		margin-left: 13px;
		flex: 1;
		color: #333;
		white-space: nowrap;
	}

	.more-arrow {
		width: 0;
		height: 0;
		margin-right: 7px;
		border-top: 4px solid transparent;
		border-bottom: 4px solid transparent;
		border-left: 5px solid #7e8796;
	}

	.menu-sep {
		height: 1px;
		margin: 4px -2px 4px -1px;
		background: #e1e2e7;
	}

	.submenu {
		position: absolute;
		left: 198px;
		top: 33px;
		width: 333px;
		height: 708px;
		box-sizing: border-box;
		background: #fff;
		box-shadow: 3px 3px 8px rgba(0, 0, 0, 0.5);
	}

	.sub-title {
		height: 35px;
		margin: 0 1px 1px;
		padding: 13px 0 0 13px;
		box-sizing: border-box;
		border-bottom: 1px solid #ebebeb;
		color: #333;
		font-weight: 500;
		line-height: 18px;
	}

	.sub-row {
		display: flex;
		align-items: center;
		gap: 13px;
		height: 46px;
		margin-left: 1px;
		margin-right: 1px;
		padding-left: 26px;
		color: #333;
		white-space: nowrap;
	}

	.sub-label {
		padding-bottom: 2px;
	}

	.sub-row.active {
		background: #e8eaef;
	}

	/* watermark */
	.mark {
		position: absolute;
		left: 1060px;
		top: 937px;
		display: flex;
		pointer-events: none;
	}

	.swirl {
		flex-shrink: 0;
		margin-right: -7px;
	}

	.mark-cn {
		color: #4c93dc;
		font-size: 21px;
		font-weight: 700;
		line-height: 24px;
		white-space: nowrap;
	}

	.mark-url {
		margin-top: 1px;
		color: #6fc48a;
		font-family: 'Liberation Sans', sans-serif;
		font-size: 17.5px;
		line-height: 20px;
	}

	.overlay {
		position: absolute;
		left: 0;
		top: 0;
		pointer-events: none;
		filter: drop-shadow(2px 3px 2px rgba(0, 0, 0, 0.45));
	}

	.cursor {
		position: absolute;
		left: 463px;
		top: 93px;
	}
</style>
